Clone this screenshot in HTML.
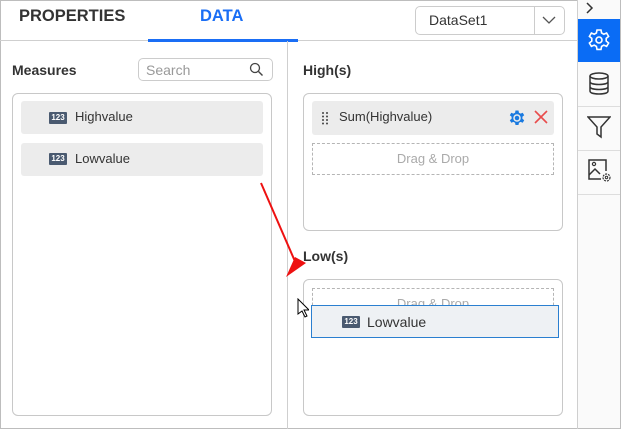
<!DOCTYPE html>
<html><head><style>
*{box-sizing:border-box;margin:0;padding:0}
body{width:621px;height:429px;position:relative;font-family:"Liberation Sans",sans-serif;background:#fff;overflow:hidden;color:#333}
.a{position:absolute}
.box{position:absolute;border:1px solid #c8c8c8;border-radius:6px;background:#fff}
.item{position:absolute;background:#ececec;border-radius:3px;font-size:13px;color:#333}
.ic{position:absolute;width:18px;height:12px;background:#4a5a70;color:#fff;font-size:8px;font-weight:bold;line-height:12px;text-align:center;border-radius:1px}
.dash{position:absolute;border:1px dashed #b5b5b5;color:#aaa;font-size:13px;text-align:center}
.lbl{position:absolute;font-size:14px;font-weight:bold;color:#333}
</style></head><body>
<div class="a" style="left:0;top:0;width:621px;height:429px;border:1px solid #bdbdbd"></div>
<div class="a" style="left:0;top:40px;width:577px;height:1px;background:#cfcfcf"></div>
<div class="a" style="left:19px;top:7px;font-size:16.5px;font-weight:bold;color:#333">PROPERTIES</div>
<div class="a" style="left:200px;top:7px;font-size:16.5px;font-weight:bold;color:#1a6ef5">DATA</div>
<div class="a" style="left:148px;top:39px;width:150px;height:3px;background:#1a6ef5"></div>
<div class="a" style="left:415px;top:6px;width:150px;height:29px;border:1px solid #ccc;border-radius:5px"></div>
<div class="a" style="left:534px;top:7px;width:1px;height:27px;background:#ccc"></div>
<div class="a" style="left:429px;top:12px;font-size:14px;color:#333">DataSet1</div>
<svg class="a" style="left:542px;top:15px" width="14" height="10"><path d="M1 2l6 6 6-6" fill="none" stroke="#555" stroke-width="1.3"/></svg>
<div class="a" style="left:287px;top:41px;width:1px;height:388px;background:#cfcfcf"></div>
<div class="a" style="left:577px;top:0;width:1px;height:429px;background:#cfcfcf"></div>
<div class="a" style="left:578px;top:0;width:42px;height:428px;background:#fafafa"></div>
<svg class="a" style="left:585px;top:2px" width="10" height="12"><path d="M2 1l5 5-5 5" fill="none" stroke="#333" stroke-width="1.5"/></svg>
<div class="a" style="left:578px;top:19px;width:42px;height:43px;background:#0a6cf5"></div>
<svg class="a" style="left:587px;top:28px" width="24" height="24" viewBox="0 0 24 24"><path d="M10 2h4l.6 3 2.2 1.2 2.8-1.2 2 3.4-2.4 2v2.6l2.4 2-2 3.4-2.8-1.2-2.2 1.2-.6 3h-4l-.6-3-2.2-1.2-2.8 1.2-2-3.4 2.4-2v-2.6l-2.4-2 2-3.4 2.8 1.2 2.2-1.2z" fill="none" stroke="#fff" stroke-width="1.6"/><circle cx="12" cy="12" r="3" fill="none" stroke="#fff" stroke-width="1.6"/></svg>
<div class="a" style="left:578px;top:106px;width:42px;height:1px;background:#ddd"></div>
<div class="a" style="left:578px;top:150px;width:42px;height:1px;background:#ddd"></div>
<div class="a" style="left:578px;top:194px;width:42px;height:1px;background:#ddd"></div>
<svg class="a" style="left:588px;top:72px" width="22" height="24" viewBox="0 0 22 24"><ellipse cx="11" cy="4" rx="9" ry="3" fill="none" stroke="#333" stroke-width="1.5"/><path d="M2 4v15c0 2 4 3 9 3s9-1 9-3V4M2 9.5c0 2 4 3 9 3s9-1 9-3M2 14.5c0 2 4 3 9 3s9-1 9-3" fill="none" stroke="#333" stroke-width="1.5"/></svg>
<svg class="a" style="left:587px;top:115px" width="24" height="24" viewBox="0 0 24 24"><path d="M1 2h22l-9 10v10l-4-3v-7z" fill="none" stroke="#333" stroke-width="1.5"/></svg>
<svg class="a" style="left:587px;top:158px" width="26" height="26" viewBox="0 0 26 26"><path d="M14 21H2V2h17v11" fill="none" stroke="#333" stroke-width="1.5"/><path d="M2 17l6-6 5 5" fill="none" stroke="#333" stroke-width="1.5"/><circle cx="7" cy="6" r="1.6" fill="none" stroke="#333" stroke-width="1.2"/><circle cx="19.5" cy="19.5" r="3.5" fill="none" stroke="#333" stroke-width="1.2" stroke-dasharray="2 1"/><circle cx="19.5" cy="19.5" r="1.2" fill="none" stroke="#333"/></svg>
<div class="lbl" style="left:12px;top:62px">Measures</div>
<div class="a" style="left:138px;top:58px;width:135px;height:23px;border:1px solid #ccc;border-radius:5px"></div>
<div class="a" style="left:146px;top:62px;font-size:14px;color:#999">Search</div>
<svg class="a" style="left:249px;top:62px" width="15" height="15"><circle cx="6" cy="6" r="4.5" fill="none" stroke="#444" stroke-width="1.3"/><path d="M9.5 9.5l4 4" stroke="#444" stroke-width="1.4"/></svg>
<div class="box" style="left:12px;top:93px;width:260px;height:323px"></div>
<div class="item" style="left:21px;top:101px;width:242px;height:33px"><div class="ic" style="left:28px;top:11px">123</div><span class="a" style="left:54px;top:8px">Highvalue</span></div>
<div class="item" style="left:21px;top:143px;width:242px;height:33px"><div class="ic" style="left:28px;top:10px">123</div><span class="a" style="left:54px;top:8px">Lowvalue</span></div>
<div class="lbl" style="left:303px;top:62px">High(s)</div>
<div class="box" style="left:303px;top:93px;width:260px;height:138px"></div>
<div class="item" style="left:312px;top:101px;width:242px;height:34px">
<svg class="a" style="left:9px;top:10px" width="8" height="14"><g fill="#444"><circle cx="2" cy="2" r="1"/><circle cx="6" cy="2" r="1"/><circle cx="2" cy="5.5" r="1"/><circle cx="6" cy="5.5" r="1"/><circle cx="2" cy="9" r="1"/><circle cx="6" cy="9" r="1"/><circle cx="2" cy="12.5" r="1"/><circle cx="6" cy="12.5" r="1"/></g></svg>
<span class="a" style="left:27px;top:8px">Sum(Highvalue)</span>
<svg class="a" style="left:196px;top:8px" width="18" height="18" viewBox="0 0 24 24"><path d="M10 2h4l.6 3 2.2 1.2 2.8-1.2 2 3.4-2.4 2v2.6l2.4 2-2 3.4-2.8-1.2-2.2 1.2-.6 3h-4l-.6-3-2.2-1.2-2.8 1.2-2-3.4 2.4-2v-2.6l-2.4-2 2-3.4 2.8 1.2 2.2-1.2z" fill="#1a7ae0"/><circle cx="12" cy="12" r="5" fill="#ececec"/><circle cx="12" cy="12" r="3" fill="#1a7ae0"/></svg>
<svg class="a" style="left:222px;top:9px" width="14" height="14"><path d="M1 1l12 12M13 1L1 13" stroke="#e84c4c" stroke-width="1.6"/></svg>
</div>
<div class="dash" style="left:312px;top:143px;width:242px;height:32px;line-height:30px">Drag &amp; Drop</div>
<div class="lbl" style="left:303px;top:248px">Low(s)</div>
<div class="box" style="left:303px;top:279px;width:260px;height:137px"></div>
<div class="dash" style="left:312px;top:288px;width:242px;height:32px;line-height:30px;overflow:hidden">Drag &amp; Drop</div>
<div class="a" style="left:311px;top:305px;width:248px;height:33px;border:1px solid #2a7fd0;background:#eef1f4;font-size:14px;color:#333"><div class="ic" style="left:30px;top:10px">123</div><span class="a" style="left:55px;top:8px">Lowvalue</span></div>
<svg class="a" style="left:255px;top:180px" width="60" height="100"><path d="M6 3L42 86" stroke="#ee1111" stroke-width="2"/><path d="M51 83L31 97 40 77z" fill="#ee1111"/></svg>
<svg class="a" style="left:297px;top:298px" width="12" height="20"><path d="M1 1v15l4-3 3 6 2-1-3-6h5z" fill="#fff" stroke="#000" stroke-width="1"/></svg>
</body></html>
